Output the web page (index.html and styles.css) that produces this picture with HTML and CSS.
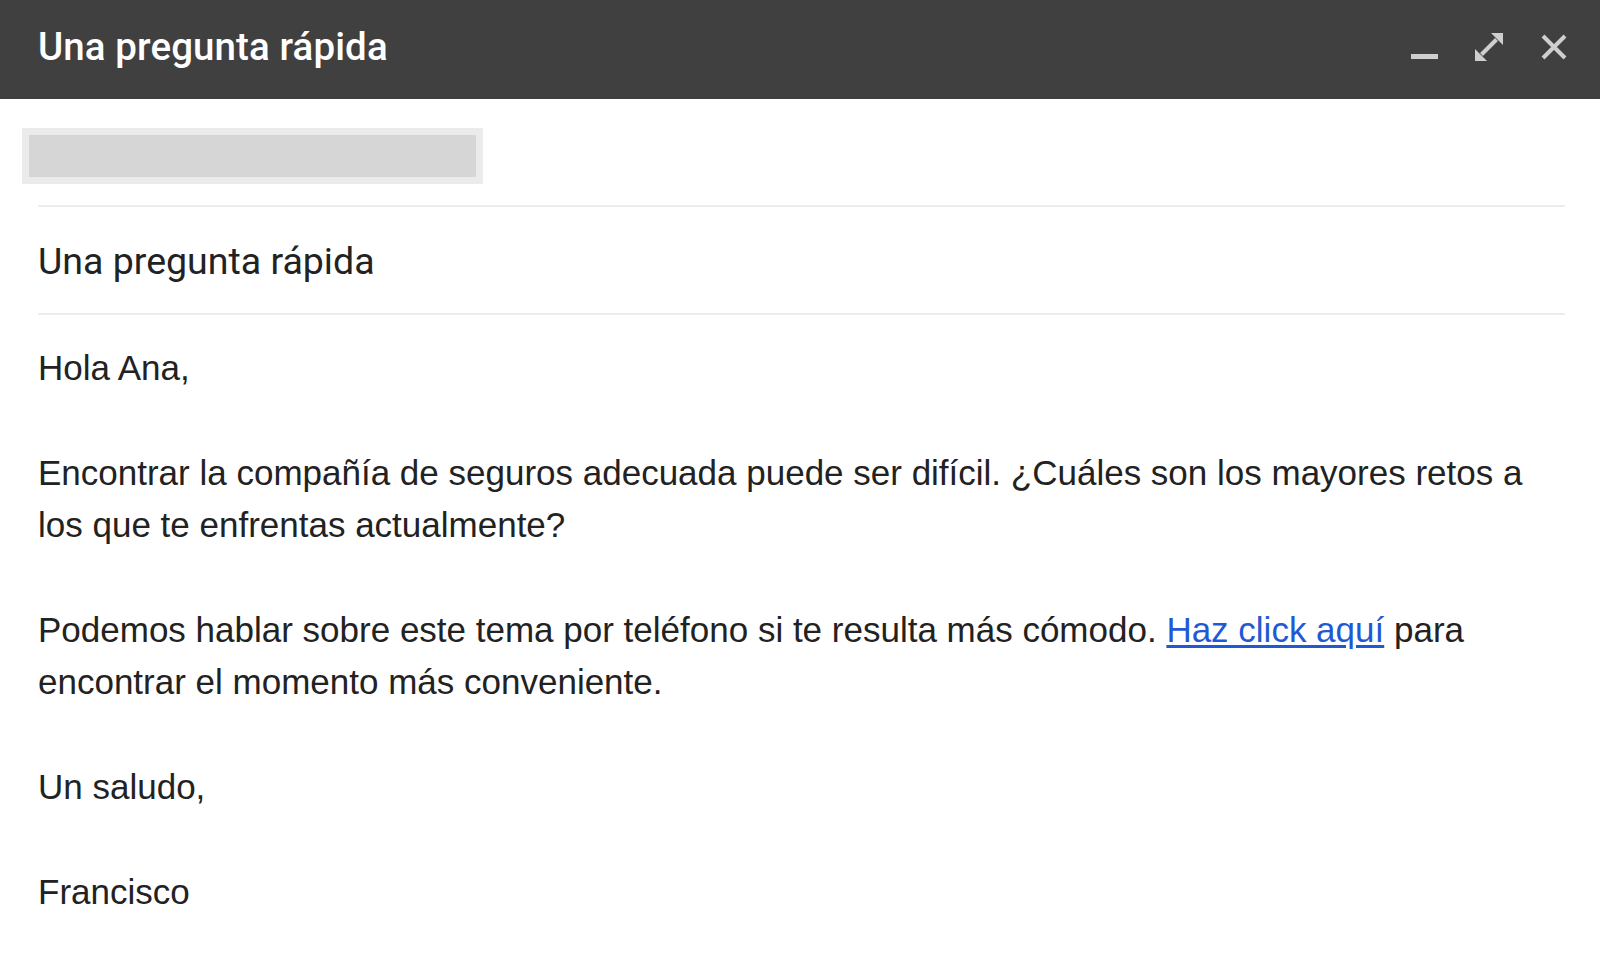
FILE: index.html
```html
<!DOCTYPE html>
<html lang="es">
<head>
<meta charset="utf-8">
<title>Una pregunta rápida</title>
<link rel="stylesheet" href="styles.css">
</head>
<body>
<div class="compose">
  <header class="titlebar">
    <h1 class="title">Una pregunta rápida</h1>
    <div class="controls">
      <svg class="icon icon-min" width="28" height="28" viewBox="0 0 28 28"><rect x="0" y="22" width="27" height="5" fill="#cfcfcf"/></svg>
      <svg class="icon icon-exp" width="30" height="30" viewBox="0 0 30 30">
        <path d="M7.5 22.5 L22.5 7.5" stroke="#cfcfcf" stroke-width="4" fill="none"/>
        <polygon points="29,1 29,13 17,1" fill="#cfcfcf"/>
        <polygon points="1,29 1,17 13,29" fill="#cfcfcf"/>
      </svg>
      <svg class="icon icon-close" width="26" height="26" viewBox="0 0 26 26">
        <path d="M2 2 L24 24 M24 2 L2 24" stroke="#cfcfcf" stroke-width="4" fill="none"/>
      </svg>
    </div>
  </header>
  <div class="recipients">
    <div class="redacted"><div class="redacted-inner"></div></div>
  </div>
  <div class="content">
    <div class="subject">Una pregunta rápida</div>
    <div class="body">
      <p>Hola Ana,</p>
      <p>Encontrar la compañía de seguros adecuada puede ser difícil. ¿Cuáles son los mayores retos a los que te enfrentas actualmente?</p>
      <p>Podemos hablar sobre este tema por teléfono si te resulta más cómodo. <a href="#" class="link">Haz click aquí</a> para encontrar el momento más conveniente.</p>
      <p>Un saludo,</p>
      <p>Francisco</p>
    </div>
  </div>
</div>
</body>
</html>
```

FILE: styles.css
```css
html, body {
  margin: 0;
  padding: 0;
  background: #ffffff;
}

.compose {
  width: 1600px;
  height: 976px;
  overflow: hidden;
  background: #ffffff;
}

.titlebar {
  height: 99px;
  background: #404040;
  display: flex;
  align-items: center;
  justify-content: space-between;
  padding: 0 33px 0 38px;
  box-sizing: border-box;
}

.title {
  margin: 0;
  font-family: Roboto, "Liberation Sans", sans-serif;
  font-weight: 500;
  font-size: 38.5px;
  color: #ffffff;
  letter-spacing: 0.1px;
  position: relative;
  top: -3px;
}

.controls {
  display: flex;
  align-items: center;
  height: 99px;
}

.icon {
  display: block;
}

.icon-min {
  margin-top: -7px;
  margin-right: 35px;
}

.icon-exp {
  margin-top: -5px;
  margin-right: 37px;
}

.icon-close {
  margin-top: -5px;
}

.recipients {
  padding: 29px 0 0 22px;
  height: 106px;
  box-sizing: border-box;
}

.redacted {
  width: 461px;
  height: 56px;
  box-sizing: border-box;
  border: 7px solid #ebebeb;
  background: #ebebeb;
}

.redacted-inner {
  width: 100%;
  height: 100%;
  background: #d6d6d6;
}

.content {
  margin: 0 35px 0 38px;
  border-top: 2px solid #ececec;
}

.subject {
  height: 108px;
  display: flex;
  align-items: center;
  border-bottom: 2px solid #ececec;
  font-family: Roboto, "Liberation Sans", sans-serif;
  font-size: 37.5px;
  color: #222222;
  padding-top: 1px;
  box-sizing: border-box;
}

.body {
  padding-top: 27px;
  font-family: "Liberation Sans", Arial, sans-serif;
  font-size: 35px;
  line-height: 52.4px;
  color: #222222;
}

.body p {
  margin: 0 0 52.4px 0;
}

.link {
  color: #1f5ad4;
  text-decoration: underline;
  text-underline-offset: 3px;
}
```
